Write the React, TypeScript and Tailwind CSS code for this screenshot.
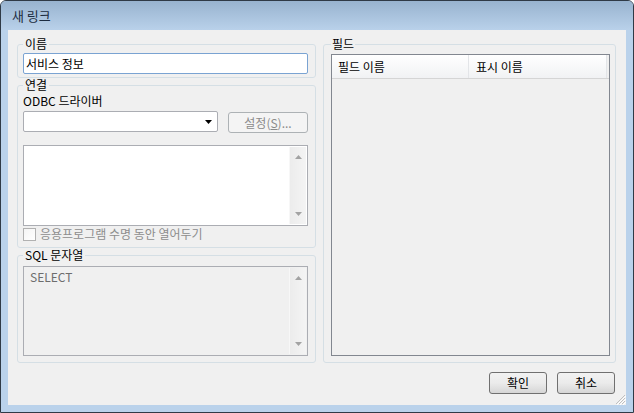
const font = { fontFamily: '"Noto Sans CJK KR", "Noto Sans", sans-serif' };

const ScrollBar = () => (
  <div className="w-[17px] h-full flex flex-col justify-between items-center bg-gradient-to-r from-[#ececec] to-[#f4f4f4] border-l border-[#f7f7f7] py-[8px]">
    <svg width="7" height="4" viewBox="0 0 7 4">
      <polygon points="3.5,0 7,4 0,4" fill="#a3a3a3" />
    </svg>
    <svg width="7" height="4" viewBox="0 0 7 4">
      <polygon points="0,0 7,0 3.5,4" fill="#a3a3a3" />
    </svg>
  </div>
);

const App = () => {
  return (
    <div
      className="w-[634px] h-[413px] flex flex-col border border-[#2f3a46] rounded-t-[6px] bg-[#bad2eb] text-[12px] leading-[14px] text-black overflow-hidden"
      style={font}
    >
      {/* title bar */}
      <div className="h-[29px] shrink-0 flex items-center pl-[11px] bg-gradient-to-b from-[#98b3cf] to-[#b9d1ea] text-[13px] text-[#1b2c40]">
        새 링크
      </div>

      {/* client area */}
      <div className="mx-[7px] h-[375px] bg-[#f0f0f0] flex flex-col pt-[7px] pl-[9px] pr-[10px]">
        <div className="flex gap-[7px] h-[326px]">
          {/* left column */}
          <div className="w-[299px] flex flex-col">
            <fieldset className="h-[41px] border border-[#d5dfe5] rounded-[3px] pl-[5px] pr-[7px] pt-[2px] pb-[3px]">
              <legend className="px-[2px] leading-[14px]">이름</legend>
              <div className="h-[21px] bg-white border border-[#7aa3d2] rounded-[2px] flex items-center pl-[2px]">
                서비스 정보
              </div>
            </fieldset>

            <fieldset className="h-[170px] border border-[#d5dfe5] rounded-[3px] pl-[5px] pr-[7px] pt-[2px] pb-[7px]">
              <legend className="px-[2px] leading-[14px]">연결</legend>
              <div className="h-[14px]">ODBC 드라이버</div>
              <div className="flex gap-[10px] mt-[3px] items-start">
                <div className="w-[195px] h-[21px] bg-white border border-[#abadb3] rounded-[2px] flex items-center justify-end pr-[5px]">
                  <svg width="7" height="4" viewBox="0 0 7 4">
                    <polygon points="0,0 7,0 3.5,4" fill="#000" />
                  </svg>
                </div>
                <div className="w-[80px] h-[21px] mt-[1px] bg-[#f4f4f4] border border-[#adb2b5] rounded-[3px] flex items-center justify-center text-[#8b8b8b]">
                  설정(<span className="underline">S</span>)...
                </div>
              </div>
              <div className="mt-[12px] h-[81px] bg-white border border-[#abadb3] flex justify-end p-[1px]">
                <ScrollBar />
              </div>
              <div className="mt-[1px] h-[14px] flex items-center gap-[4px]">
                <div className="w-[13px] h-[13px] border border-[#b1b1b1] bg-gradient-to-br from-[#f4f4f4] to-[#ffffff]" />
                <span className="text-[#8d8d8d]">응용프로그램 수명 동안 열어두기</span>
              </div>
            </fieldset>

            <fieldset className="h-[115px] border border-[#d5dfe5] rounded-[3px] pl-[5px] pr-[7px] pt-[4px] pb-[6px]">
              <legend className="px-[2px] leading-[14px]">SQL 문자열</legend>
              <div className="h-[90px] bg-[#f0f0f0] border border-[#abadb3] flex p-[1px]">
                <div className="flex-1 pl-[5px] pt-[2px] text-[#6d6d6d]">SELECT</div>
                <ScrollBar />
              </div>
            </fieldset>
          </div>

          {/* right column */}
          <fieldset className="w-[293px] h-[326px] border border-[#d5dfe5] rounded-[3px] pl-[7px] pr-[5px] pt-[3px] pb-[6px]">
            <legend className="px-[1px] leading-[14px]">필드</legend>
            <div className="h-[302px] border border-[#828790] bg-[#f0f0f0] flex flex-col">
              <div className="h-[24px] flex bg-gradient-to-b from-[#ffffff] to-[#f1f2f4] border-b border-[#d5d5d5]">
                <div className="w-[137px] border-r border-[#e3e5e8] flex items-center pl-[6px]">필드 이름</div>
                <div className="w-[138px] border-r border-[#e3e5e8] flex items-center pl-[7px]">표시 이름</div>
                <div className="flex-1 bg-[#f0f0f0]" />
              </div>
            </div>
          </fieldset>
        </div>

        {/* buttons */}
        <div className="mt-[9px] flex justify-end gap-[10px] pr-[1px]">
          <div className="w-[58px] h-[22px] border border-[#707070] rounded-[3px] bg-gradient-to-b from-[#f2f2f2] via-[#ebebeb] to-[#d6d6d6] flex items-center justify-center">
            확인
          </div>
          <div className="w-[58px] h-[22px] border border-[#707070] rounded-[3px] bg-gradient-to-b from-[#f2f2f2] via-[#ebebeb] to-[#d6d6d6] flex items-center justify-center">
            취소
          </div>
        </div>

        {/* size grip */}
        <div className="flex-1 flex justify-end items-end -mr-[10px]">
          <svg width="11" height="11" viewBox="0 0 11 11">
            <path d="M10 1 L1 10 M10 4 L4 10 M10 7 L7 10" stroke="#bfbfbf" strokeWidth="1" />
            <path d="M11 2 L2 11 M11 5 L5 11 M11 8 L8 11" stroke="#ffffff" strokeWidth="1" />
          </svg>
        </div>
      </div>
    </div>
  );
};

export default App;
